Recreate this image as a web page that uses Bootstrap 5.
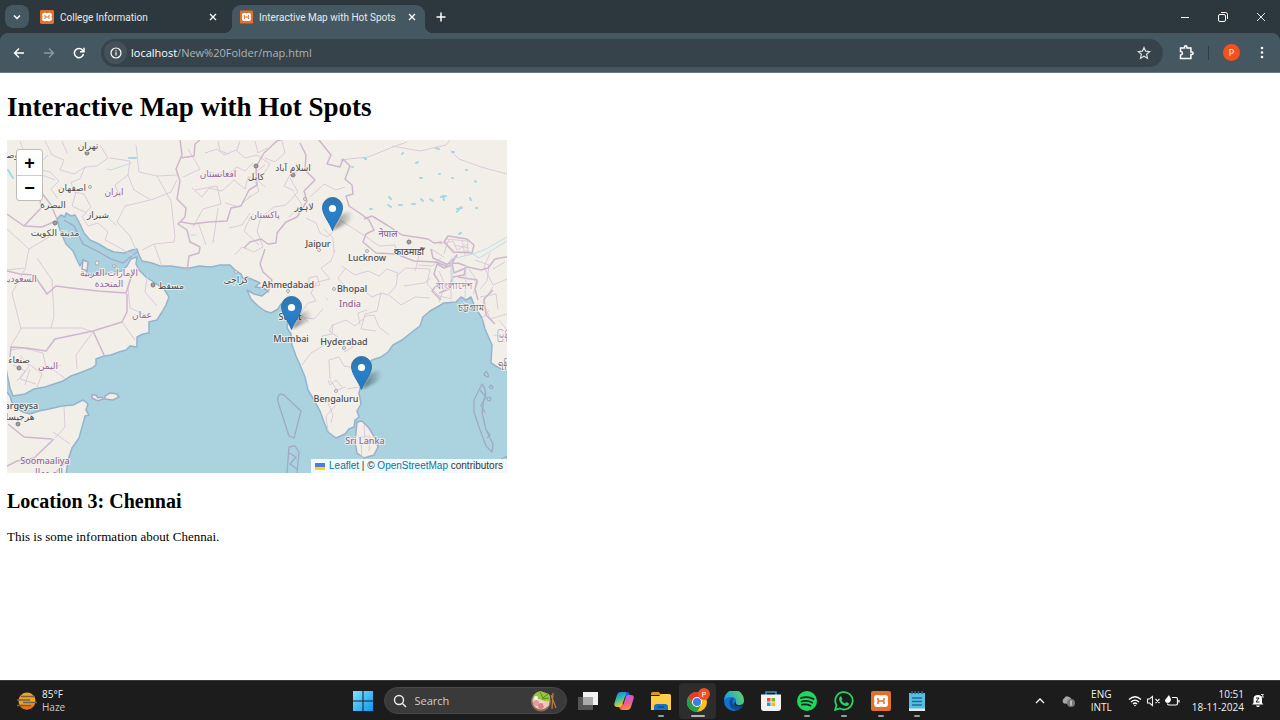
<!DOCTYPE html>
<html lang="en">
<head>
<meta charset="utf-8">
<meta name="viewport" content="width=device-width, initial-scale=1">
<title>Interactive Map with Hot Spots</title>
<link href="https://cdn.jsdelivr.net/npm/bootstrap@5.3.0/dist/css/bootstrap.min.css" rel="stylesheet">
<style>
  body { font-family: "Open Sans", "Noto Sans", sans-serif; font-size: 11px; line-height: 16px; background: #fff; color: #000; }
  button { color: inherit; }
  svg { display: block; flex: none; }
  .bare { background: none; border: 0; padding: 0; display: flex; align-items: center; justify-content: center; }

  /* browser window */
  .tabstrip { background: #2d383e; color: #e6eaec; height: 33px; padding: 5px 0 0 5px; }
  .tabmenu { width: 24px; height: 23px; border-radius: 8px; background: #455861; }
  .tab { height: 28px; padding: 0 9px 4px 8px; width: 193px; font-family: Roboto, sans-serif; font-size: 10px; }
  .tab.other { padding-left: 7px; padding-right: 11px; width: 195px; }
  .tab.current { background: #455861; border-radius: 9px 9px 0 0; position: relative; }
  .tab.current::before, .tab.current::after { content: ""; position: absolute; bottom: 0; width: 8px; height: 8px; }
  .tab.current::before { right: 100%; background: radial-gradient(circle at 0 0, transparent 8px, #455861 8px); }
  .tab.current::after { left: 100%; background: radial-gradient(circle at 100% 0, transparent 8px, #455861 8px); }
  .tabtitle { padding-left: 6px; padding-top: 1px; }
  .winctl { width: 38px; height: 23px; }
  .toolbar { background: #2d383e; }
  .toolbar-in { background: #455861; color: #fff; height: 40px; border-radius: 8px 8px 0 0; padding: 0 9px 0 4px; border-bottom: 1px solid #6c7a81; }
  .navbtn { width: 30px; height: 28px; }
  .omni { background: #37434a; height: 28px; border-radius: 14px; padding: 0 12px 0 3px; margin-left: 7px; }
  .info { width: 23px; height: 23px; border-radius: 50%; background: #455158; }
  .urltext { font-size: 11px; color: #aab4b9; text-decoration: none; }
  .urltext b { font-weight: 400; color: #fff; }
  .split { width: 1px; height: 14px; background: #2f3d44; margin: 0 14px; }
  .avatar { width: 17px; height: 17px; border-radius: 50%; background: #f4511e; color: #fff; font-size: 9px; }
  .dots { width: 18px; margin-left: 13px; }

  /* page */
  .doc { font-family: "Liberation Serif", serif; padding: 18px 7px; }
  .doc h1 { font-size: 27px; line-height: 32px; font-weight: 700; margin: 0 0 17px; }
  .doc h2 { font-size: 20px; line-height: 24px; font-weight: 700; margin: 16px 0; }
  .doc p { font-size: 13px; line-height: 16px; margin: 0; }
  .map { width: 500px; max-width: 100%; height: 333px; overflow: hidden; background: #f2efe9; }
  .zoomer { left: 9px; top: 9px; width: 27px; border: 1px solid #bdbdb9; border-radius: 3px; background: #fff; overflow: hidden; }
  .zoomer button { height: 25px; width: 25px; font: 700 18px/20px "Liberation Sans", sans-serif; }
  .zoomer button + button { border-top: 1px solid #ccc; }
  .pin { width: 38px; height: 34px; }
  .credit { right: 0; bottom: 0; background: rgba(255,255,255,.85); font: 10px/14px "Liberation Sans", sans-serif; padding: 0 4px; color: #333; }
  .credit a { color: #0078a8; text-decoration: none; }
  .labels { font-family: "Noto Sans", "Open Sans", "DejaVu Sans", sans-serif; font-size: 9px; font-weight: 500; text-anchor: middle; fill: #4c4c4c; stroke: #f5f3ef; stroke-opacity: .8; stroke-width: 2px; paint-order: stroke; stroke-linejoin: round; }
  .labels .country { fill: #94689a; }
  .labels .ar { font-family: "DejaVu Sans", sans-serif; }

  /* desktop taskbar */
  .taskbar { background: #1c1c1c; color: #f2f2f2; height: 40px; border-top: 1px solid #363a3a; line-height: 13px; font-size: 10px; }
  .side { flex: 1 1 0; min-width: 0; }
  .start { width: 36px; height: 36px; margin-right: 3px; }
  .finder { width: 183px; height: 27px; border-radius: 14px; background: #3a3a3a; border: 1px solid #474747; padding: 0 8px; margin-right: 3px; }
  .finder input { width: 80px; background: none; border: 0; outline: 0; padding: 0; color: #ddd; font-size: 11px; line-height: 16px; }
  .finder input::placeholder { color: #d0d0d0; opacity: 1; }
  .apps { display: grid; grid-template-columns: repeat(10, 1fr); width: 366px; }
  .app { height: 36px; position: relative; }
  .app.open::after { content: ""; position: absolute; bottom: 2px; width: 6px; height: 2px; border-radius: 1px; background: #9a9a9a; }
  .app.active { background: #2d2d2d; border-radius: 4px; }
  .app.active::after { width: 14px; background: #b4b4b4; }
</style>
</head>
<body>
<svg width="0" height="0" class="position-absolute" aria-hidden="true">
  <defs>
    <symbol id="xampp" viewBox="0 0 20 20">
      <rect width="20" height="20" rx="2" fill="#e5702a"/>
      <path d="M6 5h2q2 0 2 2 0-2 2-2h2q2 0 2 2v1q0 2-2 2 2 0 2 2v1q0 2-2 2h-2q-2 0-2-2 0 2-2 2H6q-2 0-2-2v-1q0-2 2-2-2 0-2-2V7q0-2 2-2z" fill="#fff" stroke="#fff" stroke-width="2"/>
      <path d="M7 7v1.700q0 1.300 1.300 1.300h3.400Q13 10 13 8.700V7M7 13v-1.500Q7 10 8.300 10h3.400q1.300 0 1.300 1.500V13" fill="none" stroke="#e5702a" stroke-width="1.600"/>
    </symbol>
    <linearGradient id="pinfill" x2="0" y2="1"><stop stop-color="#2f76ad"/><stop offset=".5" stop-color="#2a80c8"/><stop offset="1" stop-color="#1f78c6"/></linearGradient>
    <linearGradient id="shade"><stop stop-color="#000" stop-opacity=".5"/><stop offset="1" stop-color="#000" stop-opacity="0"/></linearGradient>
    <filter id="soft" x="-30%" y="-30%" width="160%" height="160%"><feGaussianBlur stdDeviation="1.500"/></filter>
    <symbol id="pin" viewBox="0 0 38 34">
      <path d="M11 33 18 19Q25 13 31 16 32 22 24 27z" fill="url(#shade)" filter="url(#soft)"/>
      <path d="M10.500 33.500C8 26 .5 18 .5 10.500a10 10 0 0 1 20 0C20.500 18 13 26 10.500 33.500z" fill="url(#pinfill)" stroke="#2b71ab"/>
      <circle cx="10.500" cy="11.500" r="3.600" fill="#fff"/>
    </symbol>
  </defs>
</svg>

<div class="d-flex flex-column min-vh-100">
  <header>
    <div class="tabstrip d-flex align-items-start">
      <button class="bare tabmenu" aria-label="Search tabs"><svg width="10" height="10" viewBox="0 0 10 10" fill="none" stroke="#fff" stroke-width="1.500"><path d="m2 3.500 3 3 3-3"/></svg></button>
      <div class="tab other d-flex align-items-center ms-1">
        <svg width="14" height="14"><use href="#xampp"/></svg>
        <span class="tabtitle flex-grow-1 text-nowrap">College Information</span>
        <button class="bare" aria-label="Close College Information"><svg width="8" height="8" viewBox="0 0 8 8" stroke="#fff" stroke-width="1.300"><path d="m1 1 6 6M7 1 1 7"/></svg></button>
      </div>
      <div class="tab current d-flex align-items-center ms-1 me-1">
        <svg width="13" height="14"><use href="#xampp"/></svg>
        <span class="tabtitle flex-grow-1 text-nowrap">Interactive Map with Hot Spots</span>
        <button class="bare" aria-label="Close Interactive Map"><svg width="8" height="8" viewBox="0 0 8 8" stroke="#fff" stroke-width="1.300"><path d="m1 1 6 6M7 1 1 7"/></svg></button>
      </div>
      <button class="bare tabmenu bg-transparent" aria-label="New tab"><svg width="10" height="10" viewBox="0 0 10 10" stroke="#fff" stroke-width="1.500"><path d="M5 .5v9M.5 5h9"/></svg></button>
      <div class="d-flex ms-auto">
        <button class="bare winctl" aria-label="Minimize"><svg width="10" height="10" stroke="#fff"><path d="M1 5.500h8"/></svg></button>
        <button class="bare winctl" aria-label="Restore"><svg width="10" height="10" viewBox="0 0 10 10" fill="none" stroke="#fff"><rect x=".5" y="2.500" width="7" height="7" rx="1.500"/><path d="M3 .5h4.500q2 0 2 2V7"/></svg></button>
        <button class="bare winctl" aria-label="Close"><svg width="10" height="10" stroke="#e4e8ea"><path d="m1 1 8 8M9 1 1 9"/></svg></button>
      </div>
    </div>
    <div class="toolbar">
      <div class="toolbar-in d-flex align-items-center">
        <div class="d-flex">
          <button class="bare navbtn" aria-label="Back"><svg width="12" height="12" viewBox="0 0 12 12" fill="none" stroke="#fff" stroke-width="1.400"><path d="M11 6H1.500M6 1.500 1.500 6 6 10.500"/></svg></button>
          <button class="bare navbtn" aria-label="Forward"><svg width="12" height="12" viewBox="0 0 12 12" fill="none" stroke="#8d999f" stroke-width="1.400"><path d="M1 6h9.500M6 1.500 10.500 6 6 10.500"/></svg></button>
          <button class="bare navbtn" aria-label="Reload"><svg width="12" height="12" viewBox="0 0 12 12" fill="none" stroke="#fff" stroke-width="1.500"><path d="M10.500 7A4.600 4.600 0 1 1 9.600 3.200L10.800 4.500M11 .8v4H7"/></svg></button>
        </div>
        <div class="omni d-flex align-items-center flex-grow-1">
          <button class="bare info me-1" aria-label="Site information"><svg width="12" height="12" viewBox="0 0 12 12" fill="none" stroke="#fff" stroke-width="1.200"><circle cx="6" cy="6" r="5"/><path d="M6 5.300v3.200M6 3.200v1.200"/></svg></button>
          <a class="urltext" href="#"><b>localhost</b>/New%20Folder/map.html</a>
          <button class="bare ms-auto" aria-label="Bookmark"><svg width="14" height="14" viewBox="0 0 14 14" fill="none" stroke="#d5dbde" stroke-width="1.200"><path d="m7 1.500 1.600 3.700 4 .4-3 2.700.9 4L7 10.200l-3.500 2.100.9-4-3-2.700 4-.4z"/></svg></button>
        </div>
        <button class="bare ms-3" aria-label="Extensions"><svg width="15" height="15" viewBox="0 0 15 15" fill="none" stroke="#fff" stroke-width="1.500"><path d="M1.500 3h4V2a1.200 1.200 0 0 1 2.400 0v1h4v4h1a1.200 1.200 0 0 1 0 2.400h-1V13.500H1.500V10q2-.4 2-1.800t-2-1.700z"/></svg></button>
        <span class="split"></span>
        <button class="bare avatar" aria-label="Profile">P</button>
        <button class="bare dots" aria-label="Menu"><svg width="4" height="13" viewBox="0 0 4 13" fill="#fff"><circle cx="2" cy="2" r="1.300"/><circle cx="2" cy="6.500" r="1.300"/><circle cx="2" cy="11" r="1.300"/></svg></button>
      </div>
    </div>
  </header>

  <main class="doc flex-grow-1">
    <h1>Interactive Map with Hot Spots</h1>
    <div class="map position-relative">
      <svg width="500" height="333" viewBox="7 140 500 333" role="img" aria-label="Map of South Asia">
        <rect x="7" y="140" width="500" height="334" fill="#f2efe9"/>
        <!-- seas -->
        <path fill="#aad3df" stroke="#94b4cd" stroke-width="1.500" stroke-linejoin="round" d="M57 219 61 215 65 217 66 213 71 216 75 215 80 224 84 233 90 240 99 244 107 249 114 252 124 253 132 250 137 249 139 255 142 261 152 263 160 266 171 266 184 268 190 268 199 266 211 267 220 265 230 265 235 270 241 274 244 280 249 278 256 281 260 283 255 287 263 288 268 291 262 296 254 294 247 290 251 299 258 306 265 311 271 313 278 309 281 304 285 305 286 311 284 316 288 321 287 328 291 334 292 345 296 356 300 365 305 377 308 390 314 400 320 411 324 422 328 432 336 438 345 434 349 429 354 427 355 420 359 417 357 411 361 404 359 393 362 382 366 366 372 360 381 357 388 352 393 345 402 340 412 332 420 326 423 317 430 311 439 306 444 303 456 302 461 297 466 300 471 297 475 307 482 318 485 329 492 345 491 363 499 368 509 371V475H66L68 460 72 448 79 438 84 420 85 416 89 415 86 410 88 404 83 400 73 405 62 406 49 409 39 411 30 414 23 412 18 409 12 403 10 396 5 390V364L10 388 13 396 25 394 34 389 45 387 54 384 63 381 71 376 82 372 92 368 96 365 96 359 104 356 111 355 119 352 126 350 130 346 137 347 137 337 143 334 149 333 149 322 157 320 162 312 166 305 169 297 164 289 155 283 146 277 139 270 136 264 137 257 131 259 127 266 122 271 114 272 106 274 96 275 88 275 84 266 83 260 80 266 77 260 73 251 66 244 62 235 59 227z"/>
        <path fill="none" stroke="#a3a5c9" stroke-width="1.200" d="m64 220 10 6 9 18 14 7 14 8 12 4 14-11"/>
        <g fill="#f2efe9" stroke="#a2acc8" stroke-width="1.500">
          <path d="m357 422 5-1 7 7 6 10 3 9-4 8-10 3-7-5-2-11z"/>
          <path d="m105 396 5-3 7 1 2 3-6 3-8-1zM92 395l4 0 2 3 4-1 1 2-5 2-6-3z"/>
          <path d="m83 260 5 2-1 9-5-2z"/>
        </g>
        <!-- island boundaries at sea -->
        <g fill="none" stroke="#a0aac5" stroke-width="1.300" stroke-linejoin="round">
          <path d="m280 394 4 1 17 16-7 27-5-2-10-31q-3-8 1-11zM287 473l2-26 6-1 4 6-2 21M289 453l7 4-6 7 7 5"/>
          <path d="m482 384-8 16v12l5 15 7 19 6 6 1-8-7-14-4-18 2-13q4-7-2-15zM484 375q2-6 4-1t-4 1zM491 385l2 2-1 2-3-2zM488 397l3 1-1 3-3-1zM486 430l4 5-3 3M500 460l7-4v16"/>
          <path d="M480 390l6 7-5 8 4 8"/>
        </g>
        <!-- provinces and states -->
        <g fill="none" stroke="#dccbda" stroke-width="1" stroke-linejoin="round">
          <path d="m20 141 5 13 10 4 6 12 9 2 9 9-8 8 7 10M45 141l7 14 12 5-4 10 14 4 11-7 12-1 11-8-8-13M85 167l-5 12-9 3 3 10 10 2 7 13-9 10 6 9 10-3 10 9-3 8 15 8 14 8M110 158l20 3-2 14 6 15 17 10 20-8 6-12M128 175l-13 10 5 12M150 200l-25 6-8 16 13 14 6 14M136 145l3 27 18 4 20-1M157 176l14 25 4 35-1 6-20 2-12 6M154 244l8 22M48 155l-10 10-18 1M55 180l-13-5M62 141l5 12M76 192l-4 14 15 7"/>
          <path d="m7 229 22 20-4 20-13 24 9 36-11 18M29 249l20-12M37 258l15 22 2 36-3 12M20 328h62l11 4M93 332l-17 23 1 14M122 322l13 18M132 270l-4 18 2 20 18 8M148 272l-3 20 12 14M7 270l17-2M66 379l-15-11 10-3M10 350l13-2 20 5 3 15M20 355l9 11-9 13 16 5M13 365l12 6-8 10M29 364l13 10-5 13M25 385l5-16M53 432l17 12M64 407l1 20-10 11"/>
          <path d="m188 149 12 20-17 8M205 153l12-4 7 6 12-5 9 8 12-3 13 9-9 14-13-1-3 12-11-9-12 11-13-3-7 9-10-9M195 190l22-4 4 18-18 5-10 18M210 172l15 4 12-9 8 4 8-8M225 203l14 4 12-12M198 222l8 23M218 208l-5 35M246 200l13-9-5-13M250 213l-8 12-13 3M282 141l3 12-10 9-10-4M265 165l-13 10 13 12M312 165l-22 10-6 11 10 5M218 141l2 10 9 3M240 141l-3 9M255 141l3 12 9-5"/>
          <path d="m235 255 7-8 12 5 9-5-6-16 4-14 13-10 12-2 12-13-8-14M251 216l-7 15 15 14M294 193l8 12-13 12M310 197l14-13 12 6 9-3M306 218l10 5 4 10 8 4 7-8M324 229l9 9 1 14M340 220l25 16 14 10 16-1 2 10 12-6 10 7-4 15M335 250l-4 11-10 7 9 11-13 3-6 11 5 8-8 2-8 11 9 9M309 278l8-2 3 9-12 3zM342 266l13 9 13-4 11 5 8-7 11 4-2 13-8 9-7-2-4 18-12 3-4 15 15 2M344 285l-6-7 7-9M351 292l11-3 10 8 9-4M389 295l12 10 14-8 15 1M396 276l10-8 24 1M404 286l20-3 7-5M418 265l14 1 9-8M430 269l-3 15 12 12 13 3M431 249l13 8"/>
          <path d="m302 365 9-12 12-7-1-10 10-2 1-9 13-5 9 6 11-10 8-1 5 12 10 8M330 379l-1-19 10-3 5 9 18 3M344 352l9-5-5-8M330 380l7 10 9-3M347 389l13-2M327 400l6 15-2 8M336 405l-10 11 2 15M338 337l-9-6 4-7M300 317l14 2 9-10M360 325l-2-12 9-3M328 380l2 5 6-5 6 7"/>
          <path d="m364 425 1 16 10 3M358 437l12-1-1 15M362 458l-1-14"/>
          <path d="m340 160 28-3 25-10 14-5M392 146l28 5 26-6 4-5M450 150l9 9 22 8 26 7M445 239l23 2-1 11M439 244l14-3 4 9 11-6M444 242l9 11 17-2M449 239l-5 15M462 240l3 15M454 245l15 3M469 269l9 13-5 12M475 260l14 5-2 16-7 8M490 253l-6 14 9 18 14-6M493 287l-10 15 7 17 17-5M489 310l-8 10M499 320l8 10M494 335l13 2M493 269l12-7M480 297l16-3 2 15M439 271l6 14-6 17M451 263v35"/>
        </g>
        <!-- national borders -->
        <g fill="none" stroke="#ceb7ce" stroke-width="1.500" stroke-linejoin="round">
          <path d="m7 214 17 12 18 1 14-6M24 226l17-18-2-19 12 16 6 14M180 140l2 15-6 14 4 12-3 18 9 9-1 9-7 7 9 6 3 12 10 5-1 6-10 3-2 15M181 222l12 2 15-2 19-1 4-13 10-2 8-16 8-5-1-18 8-14 13-12 10-3M180 158l14-2 1-12 5-4M7 271l13 3 14 1 13 19 9-8 15 2 27 3 28 2 8-24M127 294v18l-5 10-29 9-38 8-9 12-20-3-15-1-1 10M93 331l11 24M8 424l16 13 28 2M54 439l-20 19-17 3-10 5M68 460l-13 13"/>
          <path d="m319 140 12 15-4 9 13 3 3-8 7 7-5 13 7 6 1 9-7 2 3 10 12 8 8 6 5 10-8 4-3 8 13 11 20 1 18 7 22 1 10 4 11-11-5 8 2 10 14-6 13 3 7-2 7-9 11-2 20-11M244 248l6-6 11-3 7 5 8-1 1-10 9-11 11-5 10-16-3-10 11-11-10-10 1-15-6-12M265 249l-5 15 3 8 9 8-4 13M364 219l8-3 15 9 15 10 26 4 6 4 8-1M431 249l2 9 13 6 12-1 8 3-2 9-11 2-4 12-10 4M452 265l-8 3-7-4-3 10 5 8-7 9 9 9M458 277l19 3-2 9 3 11M444 242l4-6 19 3 7 6-2 8-18-1zM493 290l-9 9 2 16 9 9"/>
        </g>
        <!-- lakes and rivers -->
        <g fill="none" stroke="#a5d7e6" stroke-linecap="round" stroke-width="2">
          <path d="m129 158 7 0M8 170l5 8M352 167h1M364 158l2 1M389 197l2 2M399 205h3M412 204h3M421 199l2 2M430 199l3 2M441 197l5-1M443 196l1 4M452 178h1M470 198l1 2M457 209l5-1M461 207l-4 5M475 181l1 1M466 170h1M416 163l2-1M436 148l3 1M452 152h2M459 234l2-1M388 205l3 2M370 209h2M420 178h2M439 174h1M476 208h1M402 154l1-1"/>
          <path stroke-width="1" stroke="#c0dde2" d="m451 259 22-5 13-5 21-12M473 254l6 4 28-17M451 259l2 25M466 266l-1 31M326 298l2 2M107 169l4 1 20-7M109 219l7 6M191 235h5"/>
        </g>
        <g fill="#a0a0a0" stroke="#7c7c7c">
          <circle cx="87" cy="153" r="2"/><circle cx="55" cy="223" r="2"/><circle cx="153" cy="285" r="2"/><circle cx="256" cy="166" r="2"/><circle cx="293" cy="175" r="2"/><circle cx="409" cy="242" r="2"/><circle cx="19" cy="368" r="2"/><circle cx="18" cy="424" r="2"/>
        </g>
        <g fill="#eee" stroke="#aaa">
          <circle cx="90" cy="187" r="1.500"/><circle cx="236" cy="272" r="1.500"/><circle cx="305" cy="199" r="1.500"/><circle cx="319" cy="250" r="1.500"/><circle cx="367" cy="251" r="1.500"/><circle cx="334" cy="289" r="1.500"/><circle cx="288" cy="291" r="1.500"/><circle cx="344" cy="348" r="1.500"/><circle cx="336" cy="391" r="1.500"/><circle cx="97" cy="263" r="2"/><circle cx="114" cy="266" r="1.500"/>
        </g>
        <g class="labels">
          <g class="ar">
            <text x="88" y="149">تهران</text><text x="72" y="191">اصفهان</text><text x="53" y="208">البصرة</text><text x="98" y="218">شیراز</text><text x="55" y="236">مدينة الكويت</text><text x="171" y="289">مسقط</text><text x="236" y="283">کراچی</text><text x="256" y="180">کابل</text><text x="293" y="171">اسلام آباد</text><text x="304" y="210">لاہور</text><text x="19" y="363">صنعاء</text><text x="20" y="420">هرجيسا</text><text x="12" y="158">موصل</text>
            <g class="country"><text x="114" y="195">ایران</text><text x="218" y="177">افغانستان</text><text x="265" y="218">پاکستان</text><text x="109" y="276">الإمارات العربية</text><text x="109" y="287">المتحدة</text><text x="20" y="282">السعودية</text><text x="142" y="318">عمان</text><text x="48" y="369">اليمن</text><text x="47" y="475">الصومال</text></g>
          </g>
          <text x="318" y="247">Jaipur</text><text x="367" y="261">Lucknow</text><text x="288" y="288">Ahmedabad</text><text x="352" y="292">Bhopal</text><text x="290" y="320">Surat</text><text x="291" y="342">Mumbai</text><text x="344" y="345">Hyderabad</text><text x="336" y="402">Bengaluru</text><text x="18" y="409">Hargeysa</text><text x="409" y="255">काठमाडौँ</text><text x="471" y="311">চট্টগ্রাম</text><text x="510" y="366">ရန်ကုန်</text>
          <g class="country"><text x="350" y="307">India</text><text x="365" y="444">Sri Lanka</text><text x="45" y="464">Soomaaliya</text><text x="388" y="237">नेपाल</text><text x="454" y="289">বাংলাদেশ</text><text x="507" y="338">မြန်မာ</text></g>
        </g>
      </svg>
      <button class="bare pin position-absolute" style="left:315px;top:57px" aria-label="Delhi"><svg width="38" height="34"><use href="#pin"/></svg></button>
      <button class="bare pin position-absolute" style="left:274px;top:156px" aria-label="Mumbai"><svg width="38" height="34"><use href="#pin"/></svg></button>
      <button class="bare pin position-absolute" style="left:344px;top:216px" aria-label="Chennai"><svg width="38" height="34"><use href="#pin"/></svg></button>
      <div class="zoomer position-absolute"><button class="bare" aria-label="Zoom in">+</button><button class="bare" aria-label="Zoom out">−</button></div>
      <div class="credit position-absolute d-flex align-items-center text-nowrap"><a href="#" class="d-flex align-items-center"><svg class="me-1" width="10" height="7"><path fill="#4c7be1" d="M0 0h10v4H0z"/><path fill="#ffd500" d="M0 4h10v3H0z"/></svg>Leaflet</a><span>&nbsp;| ©&nbsp;</span><a href="#">OpenStreetMap</a><span>&nbsp;contributors</span></div>
    </div>
    <h2>Location 3: Chennai</h2>
    <p>This is some information about Chennai.</p>
  </main>

  <footer class="taskbar d-flex align-items-center">
    <div class="side d-flex align-items-center ps-3">
      <svg width="22" height="20" viewBox="0 0 22 20"><circle cx="11" cy="10" r="8.500" fill="#f5a21b"/><path d="M3 13q8 2 15 0-2 5-7 5.500-6 0-8-5.500z" fill="#e9730d"/><path d="M5 5.500h14M1 9h13M7 11.500h14M1 14.500h14" stroke="#6b6255" stroke-width="1.300"/></svg>
      <div class="ms-1">85°F<br><span style="color:#c8c8c8">Haze</span></div>
    </div>
    <button class="bare start" aria-label="Start"><svg width="20" height="20" viewBox="0 0 20 20"><defs><linearGradient id="win" x2="1" y2="1"><stop stop-color="#80e0ff"/><stop offset="1" stop-color="#0a96f0"/></linearGradient></defs><path fill="url(#win)" d="M0 0h9.500v9.500H0zM10.500 0H20v9.500h-9.500zM0 10.500h9.500V20H0zM10.500 10.500H20V20h-9.500z"/></svg></button>
    <div class="finder d-flex align-items-center">
      <svg width="14" height="14" viewBox="0 0 14 14" fill="none" stroke="#eee" stroke-width="1.400"><circle cx="6" cy="6" r="4.500"/><path d="m9.500 9.500 3.500 3.500"/></svg>
      <label for="q" class="visually-hidden">Search</label><input id="q" class="ms-2" type="text" placeholder="Search">
      <svg class="ms-auto" width="28" height="22" viewBox="0 0 28 22"><circle cx="11" cy="11.500" r="10" fill="#8f6a52"/><circle cx="11" cy="11" r="8.500" fill="#ead9bd"/><path d="M3 9q0-6 7-8l9 3q3 6-2 8L9 9z" fill="#9bc53d"/><path d="m10 2 3 6 5-4M12 9l7-1" stroke="#4f8a22" fill="none"/><circle cx="6" cy="13" r="3" fill="#e896a4"/><circle cx="11" cy="16" r="3" fill="#d9808a"/><circle cx="16" cy="14" r="3" fill="#f1c5b5"/><circle cx="6" cy="8" r="2" fill="#fff"/><path d="m23 3-1 16M21 5l5 13" stroke="#b77a42" stroke-width="1.300"/></svg>
    </div>
    <div class="apps">
      <button class="bare app" aria-label="Task view"><svg width="20" height="18" viewBox="0 0 20 18"><path fill="#f1f1f1" d="M5 0h15v13H5z"/><path fill="#555" d="M0 5h15v13H0z"/><path fill="#aaa" d="M5 5h10v8H5z"/></svg></button>
      <button class="bare app" aria-label="Copilot"><svg width="20" height="20" viewBox="0 0 20 20"><defs><linearGradient id="cp1" x2=".3" y2="1"><stop stop-color="#1b72e8"/><stop offset=".5" stop-color="#2bbdb0"/><stop offset="1" stop-color="#f0c52d"/></linearGradient><linearGradient id="cp2" x2=".2" y2="1"><stop stop-color="#b35ef0"/><stop offset=".6" stop-color="#ec5a9c"/><stop offset="1" stop-color="#f98b3e"/></linearGradient></defs><path fill="#1f5fd6" d="M9 1h4q2 0 2.500 2l1 3h-5z"/><path fill="#f2663c" d="m4 14 5-1 2 6H8q-2 0-2.500-2z"/><path fill="url(#cp1)" d="M6 1h5q1.500 0 1 2L8.500 13q-.7 3-3 3H3Q-.5 16 .5 12L3 4q1-3 3-3z"/><path fill="url(#cp2)" d="M14 19H9q-1.500 0-1-2l3.500-10q.7-3 3-3H17q3.500 0 2.500 4L17 16q-1 3-3 3z"/></svg></button>
      <button class="bare app open" aria-label="File Explorer"><svg width="20" height="18" viewBox="0 0 20 18"><path fill="#d99a1c" d="M0 1.500Q0 0 1.500 0H8l2 3H0z"/><path fill="#ffcc45" d="M0 4h8l2-2h8.500Q20 2 20 3.500V18H0z"/><path fill="#1672c4" d="M3 18v-3q0-3 3-3h8q3 0 3 3v3z"/><path stroke="#0c4d8c" stroke-width="1.500" d="M7 15h6"/></svg></button>
      <button class="bare app open active" aria-label="Chrome"><svg width="26" height="26" viewBox="0 0 26 26"><circle cx="12" cy="14" r="10" fill="#fbc116"/><path fill="#e33b2e" d="M3.300 9A10 10 0 0 1 20.700 9H12L7.700 16.500z"/><path fill="#269e4a" d="M3.300 9a10 10 0 0 0 8.700 15l4.300-7.500H7.700z"/><circle cx="12" cy="14" r="5" fill="#fff"/><circle cx="12" cy="14" r="4" fill="#3b7de9"/><circle cx="19" cy="6" r="6" fill="#f04e23"/><text x="19" y="9" fill="#fff" font-size="8" text-anchor="middle">P</text></svg></button>
      <button class="bare app" aria-label="Edge"><svg width="20" height="20" viewBox="0 0 20 20"><defs><linearGradient id="eg" y1=".3" x2="1"><stop stop-color="#1f9fe2"/><stop offset="1" stop-color="#65d85b"/></linearGradient></defs><circle cx="10" cy="10" r="10" fill="#1374ce"/><path fill="url(#eg)" d="M0 9A10 10 0 0 1 20 9q0 5-5 5-4 0-3-3 1-4-4-5-5-.5-8 3z"/><path fill="#0c4c95" d="M8 7q-4 3-2 8 3 5 9 3.500 3-1.500 3.500-3.500Q12 17 9 13q-2-3 1-6z"/><path fill="#1c1c1c" d="M12 11q-1 3 3 3.300 3 .2 5-2.300l-1.500 3q-5 1.500-8-1-1-2 1.500-3z"/></svg></button>
      <button class="bare app" aria-label="Microsoft Store"><svg width="20" height="20" viewBox="0 0 20 20"><path fill="none" stroke="#259ddb" stroke-width="1.500" d="M5 5V1h10v4"/><path fill="#f2f2f2" d="M0 3.500h20V17q0 3-3 3H3q-3 0-3-3z"/><path fill="#ef4b24" d="M6 7h3.500v3.500H6z"/><path fill="#79b52b" d="M10.500 7H14v3.500h-3.500z"/><path fill="#1b9ce2" d="M6 11.500h3.500V15H6z"/><path fill="#f7b51a" d="M10.500 11.500H14V15h-3.500z"/></svg></button>
      <button class="bare app open" aria-label="Spotify"><svg width="20" height="20" viewBox="0 0 20 20"><circle cx="10" cy="10" r="10" fill="#1ed760"/><path fill="none" stroke="#1c1c1c" stroke-linecap="round" stroke-width="1.800" d="M4 7q7-2 12.500 1M4.500 10.500q6-1.500 10.500 1M5 13.700q5-1 8.500 1"/></svg></button>
      <button class="bare app open" aria-label="WhatsApp"><svg width="20" height="20" viewBox="0 0 20 20"><path fill="none" stroke="#25d366" stroke-width="1.800" d="m1.200 18.800 1.300-4.600A8.700 8.700 0 1 1 6 17.500z"/><path fill="#25d366" d="m7 5 1.500 3-1 1.300q1.200 2.300 3.500 3.300l1.400-1.500L15 12.500q-.3 3-3 2.500-5.500-1-7-6.500Q5 5.500 7 5z"/></svg></button>
      <button class="bare app open" aria-label="XAMPP"><svg width="20" height="20"><use href="#xampp"/></svg></button>
      <button class="bare app open" aria-label="Notepad"><svg width="16" height="20" viewBox="0 0 16 20"><path fill="#55bfe2" d="M0 2h16v17H0z"/><path fill="#e8e8e8" d="M0 17.500h16V20H0z"/><path stroke="#1c6f9f" stroke-width="1.400" d="M3 7h10M3 10.500h10M3 14h10M3 0v3M6.300 0v3M9.600 0v3M13 0v3"/></svg></button>
    </div>
    <div class="side d-flex align-items-center justify-content-end pe-3">
      <button class="bare me-3" aria-label="Show hidden icons"><svg width="10" height="8" viewBox="0 0 10 8" fill="none" stroke="#fff" stroke-width="1.300"><path d="m1 6 4-4 4 4"/></svg></button>
      <svg width="14" height="12" viewBox="0 0 14 12"><path fill="#a8a8a8" d="M3 8.500a3 3 0 0 1 0-5Q5 0 8 2q2 0 2.500 2.500V9z"/><circle cx="10" cy="8" r="4" fill="#777"/><path stroke="#fff" d="M10 5.500v5"/></svg>
      <div class="text-center ms-3 me-3">ENG<br>INTL</div>
      <svg width="14" height="12" viewBox="0 0 14 12" fill="none" stroke="#fff" stroke-width="1.200"><path d="M1 4.500q6-5.500 12 0M3 7q4-3.800 8 0M5 9q2-2 4 0"/><circle cx="7" cy="10.500" r=".8" fill="#fff" stroke="none"/></svg>
      <svg class="ms-1" width="15" height="12" viewBox="0 0 15 12" fill="none" stroke="#eee" stroke-width="1.100"><path d="M1.500 4h2L6.500 1.500v9L3.500 8h-2zM9.500 4l4 4M13.500 4l-4 4"/></svg>
      <svg class="ms-1 me-1" width="15" height="12" viewBox="0 0 15 12"><path fill="none" stroke="#fff" stroke-width="1.200" d="M7 2.500h4q1.500 0 1.500 1.500v4.500q0 1.500-1.500 1.500H4q-1.500 0-1.500-1.500M14 5v2.500"/><path fill="#fff" d="M4 0 0 5q0 3 3 3 3-1 3-4z"/></svg>
      <div class="text-end ms-2 me-2">10:51<br>18-11-2024</div>
      <svg width="12" height="13" viewBox="0 0 12 13"><path fill="#fff" d="M1.500 9V5q0-4 4.500-4 4 0 4 4v4l1.500 1.500H0zM4 11.500h4Q7.500 13 6 13t-2-1.500z"/><path fill="none" stroke="#1c1c1c" d="M4 4h3L4 8h3.500"/><path fill="none" stroke="#fff" stroke-width=".8" d="M9 .5h2.500L9.500 3H12"/></svg>
    </div>
  </footer>
</div>
<script src="https://cdn.jsdelivr.net/npm/bootstrap@5.3.0/dist/js/bootstrap.bundle.min.js"></script>
</body>
</html>
